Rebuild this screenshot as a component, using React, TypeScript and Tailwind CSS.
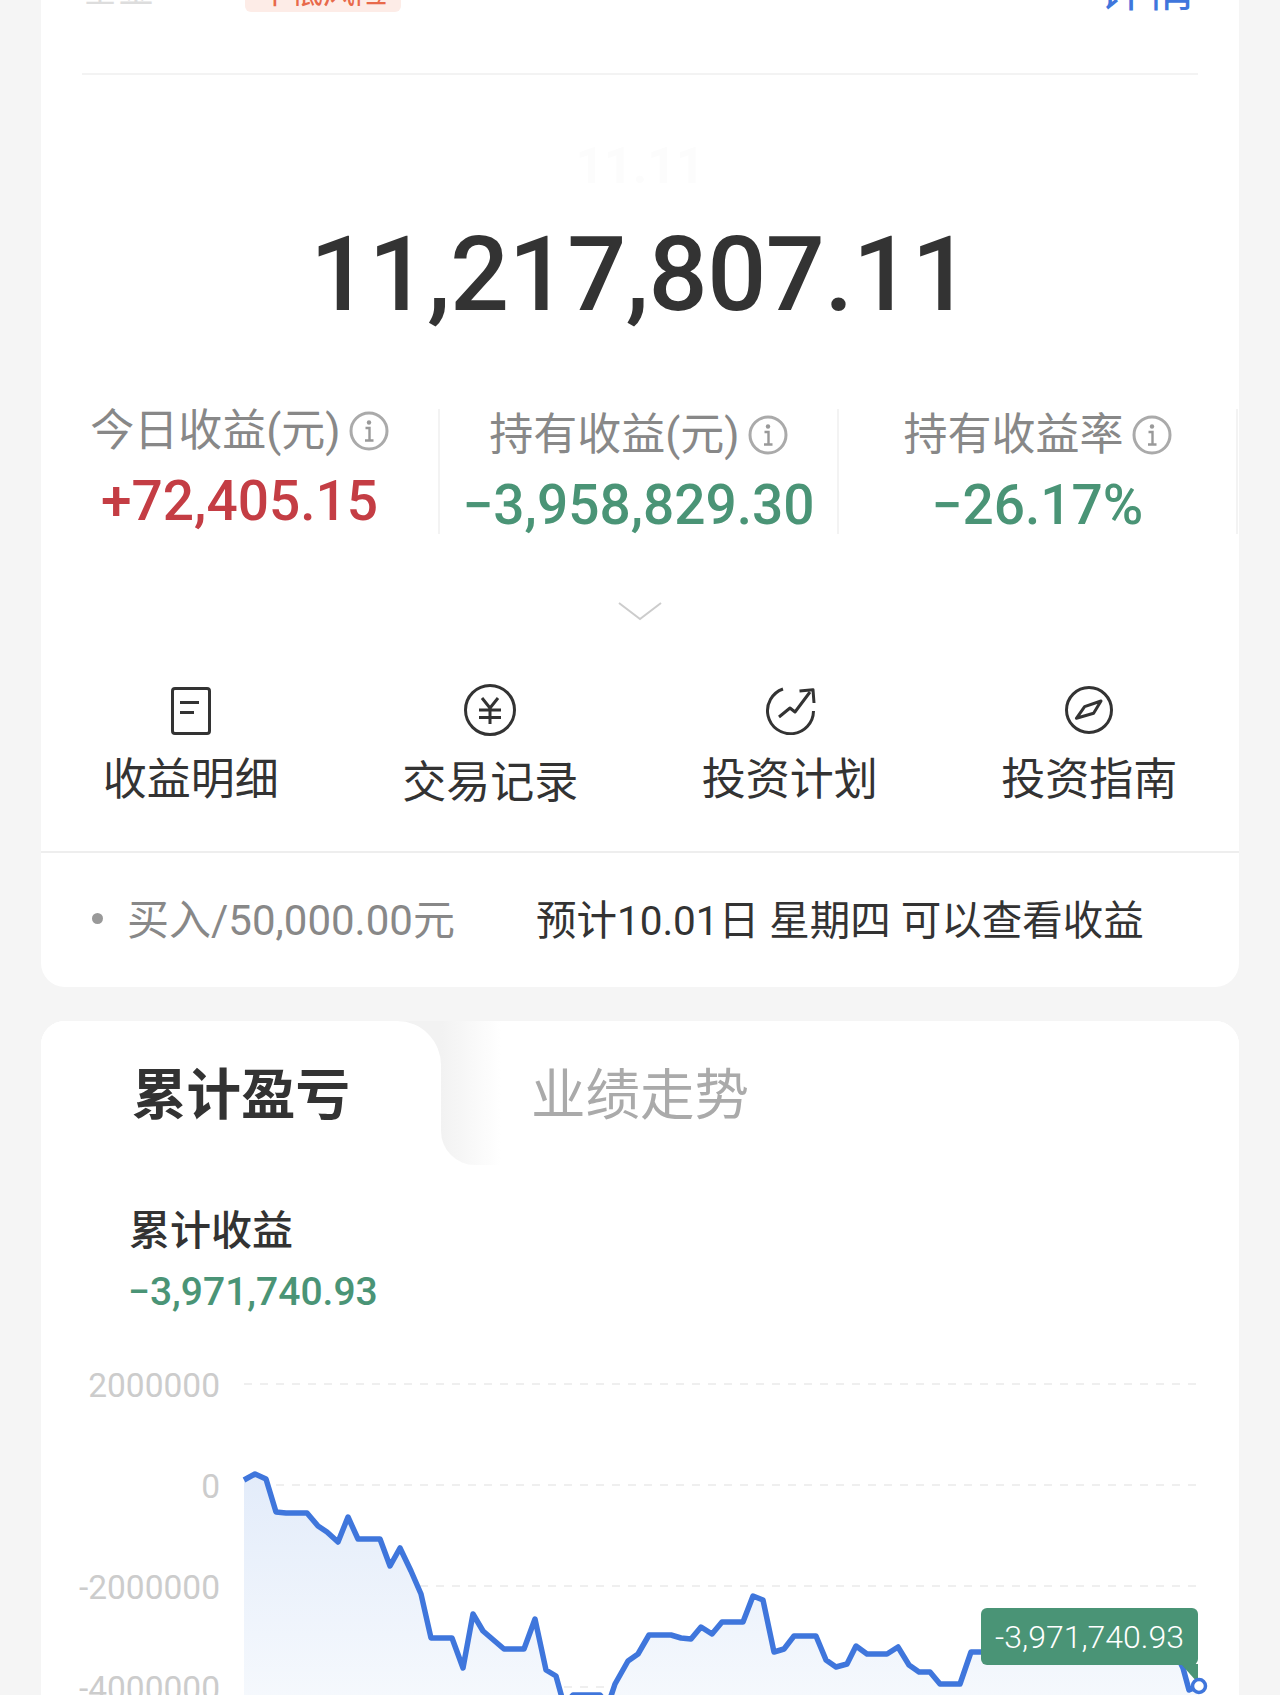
import React from 'react';

const linePoints =
  '244,1479 255,1473 266,1478 276,1511 286,1512 307,1512 318,1525 327,1531 338,1541 348,1516 358,1538 380,1538 390,1565 400,1547 411,1570 421,1593 431,1637 452,1637 463,1667 473,1613 483,1630 504,1648 524,1648 535,1618 546,1669 556,1675 564,1704 573,1694 600,1694 608,1704 615,1683 628,1660 638,1653 649,1634 671,1634 681,1637 691,1638 701,1626 712,1633 722,1621 743,1621 753,1595 763,1599 774,1651 784,1648 794,1635 816,1635 826,1659 836,1666 847,1663 856,1645 867,1653 887,1653 898,1646 909,1664 919,1671 930,1671 940,1683 960,1683 971,1651 990,1651 1050,1651 1120,1640 1170,1640 1183,1667 1189,1689 1199,1685';

const InfoIcon = () => (
  <svg width="40" height="40" viewBox="0 0 40 40" fill="none" className="shrink-0">
    <circle cx="20" cy="20" r="18" stroke="#aaaaaa" strokeWidth="3" />
    <circle cx="20" cy="11.5" r="2.2" fill="#999999" />
    <path d="M16.5 17H20.5V29M16 29.5H24.5" stroke="#999999" strokeWidth="2.4" />
  </svg>
);

const DocIcon = () => (
  <svg width="40" height="48" viewBox="0 0 40 48" fill="none">
    <rect x="1.5" y="1.5" width="37" height="45" rx="2.5" stroke="#333333" strokeWidth="3" />
    <path d="M9 15.5H28M9 25.5H23" stroke="#333333" strokeWidth="3" />
  </svg>
);

const YuanIcon = () => (
  <svg width="52" height="52" viewBox="0 0 52 52" fill="none">
    <circle cx="26" cy="26" r="24.5" stroke="#333333" strokeWidth="3" />
    <path d="M18 14L26 24L34 14M15 26H37M15 33.5H37M26 24V40" stroke="#333333" strokeWidth="3" />
  </svg>
);

const TrendIcon = () => (
  <svg width="52" height="48" viewBox="0 0 52 48" fill="none">
    <path d="M19 2A23 23 0 1 0 49.5 24" stroke="#333333" strokeWidth="3" />
    <path d="M15 30L26 21L31 25L46 5M35.5 4L49 2.7L50 16" stroke="#333333" strokeWidth="3" strokeLinejoin="round" />
  </svg>
);

const CompassIcon = () => (
  <svg width="48" height="48" viewBox="0 0 48 48" fill="none">
    <circle cx="24" cy="24" r="22.5" stroke="#333333" strokeWidth="3" />
    <path d="M36 15L28.6 27.3L11.4 32.3L19.6 20.7Z" stroke="#333333" strokeWidth="3" strokeLinejoin="round" />
  </svg>
);

const stats = [
  { label: '今日收益(元)', value: '+72,405.15', color: 'text-[#c43d44]', offset: 'pt-0' },
  { label: '持有收益(元)', value: '−3,958,829.30', color: 'text-[#4a9476]', offset: 'pt-[4px]' },
  { label: '持有收益率', value: '−26.17%', color: 'text-[#4a9476]', offset: 'pt-[4px]' },
];

const actions = [
  { label: '收益明细', icon: <DocIcon />, offset: 'pt-[3px]', gap: 'mt-[22px]' },
  { label: '交易记录', icon: <YuanIcon />, offset: 'pt-0', gap: 'mt-[24px]' },
  { label: '投资计划', icon: <TrendIcon />, offset: 'pt-[3px]', gap: 'mt-[22px]' },
  { label: '投资指南', icon: <CompassIcon />, offset: 'pt-[2px]', gap: 'mt-[23px]' },
];

const yLabels = ['2000000', '0', '-2000000', '-4000000'];

export default function App() {
  return (
    <div className="w-[1280px] h-[1695px] overflow-hidden bg-[#f5f5f5] px-[41px] [font-family:Roboto,'Noto_Sans_CJK_SC',sans-serif]">
      {/* 持仓卡片 */}
      <div className="bg-white rounded-b-[24px] -mt-[40px]">
        <div className="mx-[41px] h-[115px] border-b-2 border-[#f3f3f3] flex items-end pb-[62px]">
          <span className="text-[36px] leading-none text-[#ddd] w-[163px] mb-[3px]">基金</span>
          <span className="bg-[#fdece7] text-[#e8694a] text-[32px] leading-[40px] rounded-[6px] w-[156px] text-center -mb-[1px]">中低风险</span>
          <span className="ml-auto text-[#3f76dc] text-[48px] leading-none pr-[3px] -mb-[3px]">详情</span>
        </div>

        <div className="h-[148px] pt-[66px] text-center text-[50px] leading-none font-bold text-[#fcfcfc]">11.11</div>

        <div className="text-center text-[104px] leading-none font-medium text-[#333] tracking-[-0.5px]">11,217,807.11</div>

        {/* 收益三列 */}
        <div className="grid grid-cols-3 w-[1197px] mt-[82px]">
          {stats.map((s) => (
            <div key={s.label} className={`h-[125px] border-r-2 border-[#f3f3f3] flex flex-col items-center ${s.offset}`}>
              <div className="flex items-center gap-[8px] h-[44px] text-[44px] leading-none text-[#888]">
                {s.label}
                <InfoIcon />
              </div>
              <div className={`mt-[21px] text-[55px] leading-none font-medium ${s.color}`}>{s.value}</div>
            </div>
          ))}
        </div>

        <div className="flex justify-center mt-[67px]">
          <svg width="44" height="20" viewBox="0 0 44 20" fill="none">
            <path d="M1 2L22 18L43 2" stroke="#cccccc" strokeWidth="2" />
          </svg>
        </div>

        {/* 快捷入口 */}
        <div className="grid grid-cols-4 h-[169px] mt-[63px] border-b-2 border-[#eeeeee]">
          {actions.map((a) => (
            <div key={a.label} className={`flex flex-col items-center ${a.offset}`}>
              {a.icon}
              <div className={`${a.gap} text-[44px] leading-[46px] text-[#333]`}>{a.label}</div>
            </div>
          ))}
        </div>

        <div className="h-[134px] flex items-center pl-[51px] pt-[2px]">
          <span className="w-[11px] h-[11px] rounded-full bg-[#999] -mt-[6px]" />
          <span className="ml-[24px] text-[42px] leading-none text-[#888]">买入/50,000.00元</span>
          <span className="ml-[81px] text-[40.5px] leading-none text-[#333] whitespace-pre">预计10.01日 星期四 可以查看收益</span>
        </div>
      </div>

      {/* 盈亏卡片 */}
      <div className="bg-white rounded-t-[24px] mt-[34px] h-[800px]">
        <div className="relative flex h-[144px] bg-white rounded-t-[24px]">
          <div className="absolute left-[350px] top-0 w-[100px] h-[50px] bg-[#f2f2f2]" />
          <div className="relative z-10 w-[400px] bg-white rounded-tl-[24px] rounded-tr-[44px] flex items-center pl-[91px] pt-[5px] text-[54.5px] leading-none font-bold text-[#333]">
            累计盈亏
          </div>
          <div className="relative flex-1 flex items-center pl-[90px] pt-[5px] text-[54.5px] leading-none text-[#aaa] rounded-bl-[34px] rounded-tr-[24px] bg-[linear-gradient(to_right,#f2f2f2,#ffffff_60px)]">
            业绩走势
          </div>
        </div>

        <div className="pl-[88px] mt-[42px] text-[41px] leading-[48px] font-medium text-[#333]">累计收益</div>
        <div className="pl-[87px] mt-[13px] text-[39px] leading-[48px] font-medium text-[#4a9476]">−3,971,740.93</div>

        {/* 走势图 */}
        <div className="relative mt-[17px]">
          {yLabels.map((t) => (
            <div key={t} className="flex items-center h-[101px]">
              <div className="w-[179px] pt-[4px] text-right text-[33.5px] leading-none text-[#ccc]">{t}</div>
              <div className="ml-[24px] w-[955px] h-[2px] bg-[repeating-linear-gradient(to_right,#efefef_0,#efefef_8px,transparent_8px,transparent_16px)]" />
            </div>
          ))}
          <svg className="absolute left-0 top-0" width="1198" height="404" viewBox="41 1332 1198 404" fill="none">
            <defs>
              <linearGradient id="area" gradientUnits="userSpaceOnUse" x1="0" y1="1475" x2="0" y2="1705">
                <stop offset="0" stopColor="#e3ecfa" />
                <stop offset="1" stopColor="#f6f9fd" />
              </linearGradient>
            </defs>
            <polygon points={`${linePoints} 1199,1736 244,1736`} fill="url(#area)" />
            <polyline points={linePoints} stroke="#3f76dc" strokeWidth="5.5" strokeLinejoin="round" />
            <polygon points="1181,1663 1198,1663 1198,1682" fill="#4a9476" />
            <circle cx="1199" cy="1685" r="6.5" fill="#ffffff" stroke="#3f76dc" strokeWidth="3.5" />
          </svg>
          <div className="absolute left-[940px] top-[275px] w-[217px] h-[57px] rounded-[6px] bg-[#4a9476] flex items-center justify-center text-[32px] leading-none font-light text-white">
            -3,971,740.93
          </div>
        </div>
      </div>
    </div>
  );
}
